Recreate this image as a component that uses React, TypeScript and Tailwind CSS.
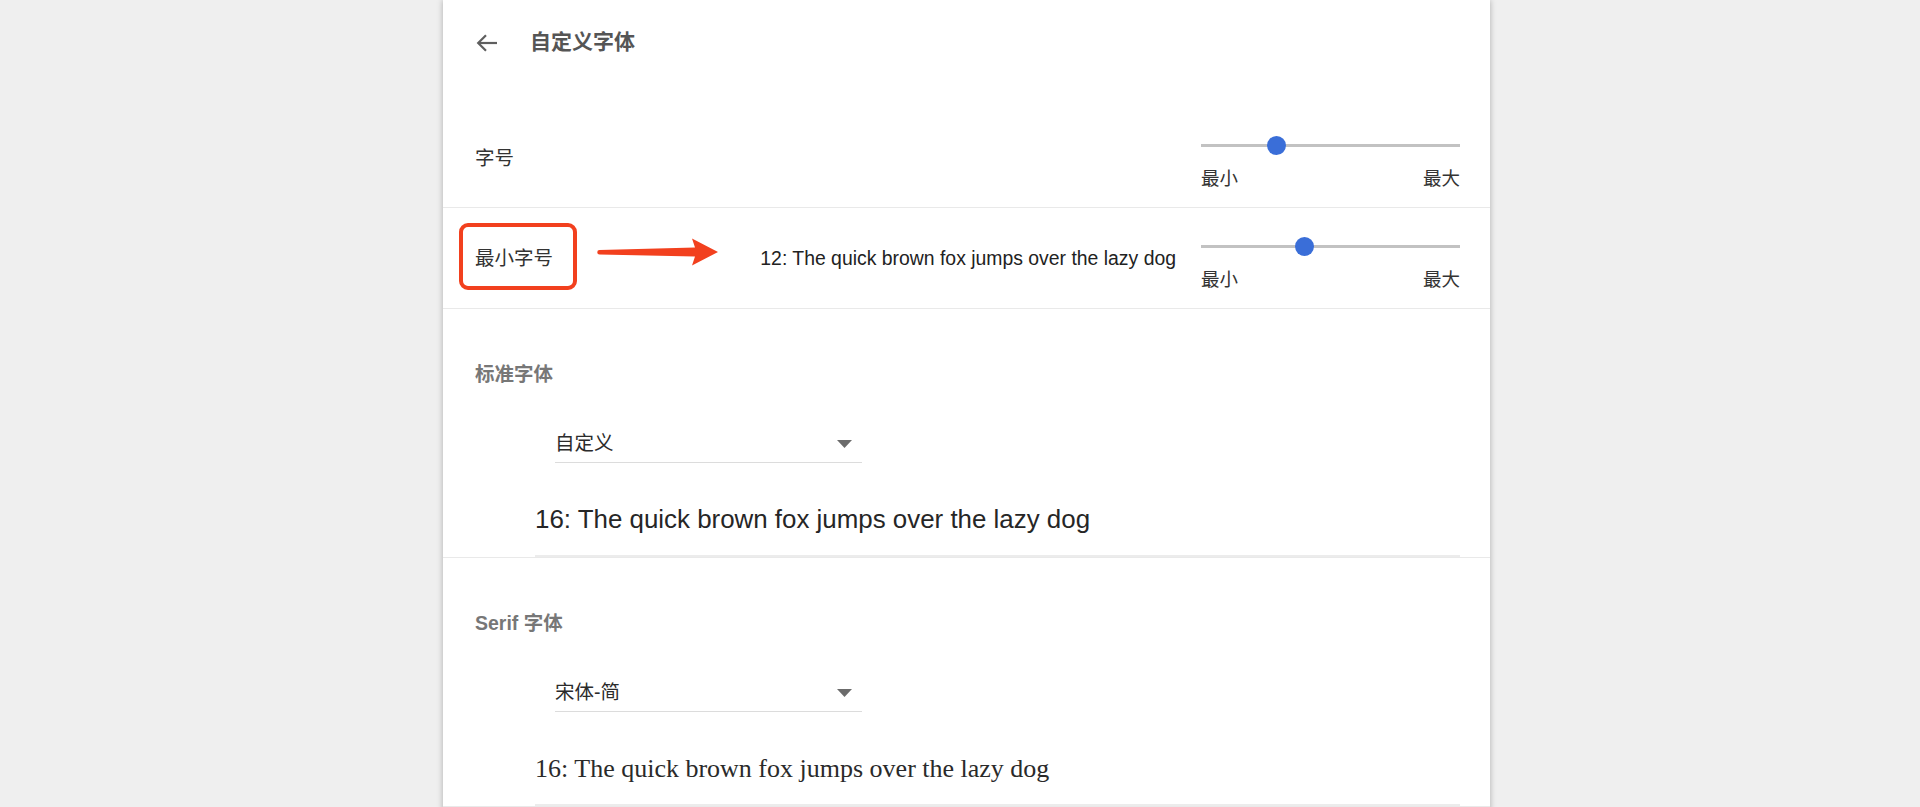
import React from "react";

const sans = "font-['Liberation_Sans','Noto_Sans_CJK_SC',sans-serif]";

interface SliderProps {
  percent: number;
}

const Slider: React.FC<SliderProps> = ({ percent }) => {
  return (
    <div className="w-[259px] self-start mt-[28px] shrink-0">
      <div className="relative h-[20px] flex items-center">
        <div className="w-full h-[3px] bg-[#c2c2c2]" />
        <div
          className="absolute top-[0.5px] w-[19px] h-[19px] -ml-[9.5px] rounded-full bg-[#3a6ed8]"
          style={{ left: `${percent}%` }}
        />
      </div>
      <div className="mt-[12px] flex justify-between text-[18.5px] leading-[24px] text-[#333]">
        <span>最小</span>
        <span>最大</span>
      </div>
    </div>
  );
};

interface FontSectionProps {
  title: string;
  value: string;
  serif?: boolean;
}

const FontSection: React.FC<FontSectionProps> = ({ title, value, serif }) => {
  return (
    <div className="pl-[32px] pr-[30px] pt-[53px] border-b border-[#e9e9e9]">
      <div className="text-[19.5px] leading-[24px] font-semibold text-[#777]">{title}</div>
      <div className="ml-[80px] mt-[39px] w-[307px] h-[38px] pr-[10px] flex items-center justify-between border-b-[1.5px] border-[#dcdcdc]">
        <span className="text-[19.5px] text-[#2b2b2b]">{value}</span>
        <svg width="15" height="8" viewBox="0 0 15 8">
          <polygon points="0,0 15,0 7.5,8" fill="#6b6b6b" />
        </svg>
      </div>
      <div className="ml-[60px] mt-[20px] h-[74px] flex items-center border-b-2 border-[#ececec]">
        <span
          className={
            serif
              ? "font-['Liberation_Serif',serif] text-[26px] text-[#2a2a2a]"
              : "text-[25.9px] text-[#262626]"
          }
        >
          16: The quick brown fox jumps over the lazy dog
        </span>
      </div>
    </div>
  );
};

const App: React.FC = () => {
  return (
    <div className={`min-h-screen bg-[#efefef] ${sans}`}>
      <div className="ml-[443px] w-[1047px] min-h-screen bg-white shadow-[0_0_6px_rgba(0,0,0,0.28)] pb-[120px]">
        {/* header */}
        <div className="h-[83px] flex items-center pl-[33px]">
          <svg width="22" height="20" viewBox="0 0 22 20" className="mt-[2px]">
            <line x1="21" y1="10" x2="2.5" y2="10" stroke="#5f5f5f" strokeWidth="2.2" />
            <polyline points="10,2.2 2.2,10 10,17.8" fill="none" stroke="#5f5f5f" strokeWidth="2.2" />
          </svg>
          <span className="ml-[32px] text-[21px] font-semibold text-[#555]">自定义字体</span>
        </div>

        {/* font size */}
        <div className="mt-[24px] h-[101px] pl-[32px] pr-[30px] flex items-start border-b border-[#e9e9e9]">
          <span className="mt-[39px] text-[19.5px] leading-[24px] text-[#333]">字号</span>
          <div className="flex-1" />
          <Slider percent={29} />
        </div>

        {/* minimum font size */}
        <div className="relative h-[101px] pl-[32px] pr-[30px] flex items-start border-b border-[#e9e9e9]">
          <span className="mt-[38px] text-[19.5px] leading-[24px] text-[#333]">最小字号</span>
          <div className="flex-1" />
          <span className="mt-[38px] mr-[25px] text-[19.4px] leading-[24px] text-[#222]">
            12: The quick brown fox jumps over the lazy dog
          </span>
          <Slider percent={40} />

          {/* annotation overlay */}
          <div className="absolute left-[16px] top-[15px] w-[118px] h-[67px] rounded-[9px] border-4 border-[#f2401e]" />
          <svg
            className="absolute left-[154px] top-[30px]"
            width="122"
            height="28"
            viewBox="0 0 122 28"
          >
            <path
              d="M2.5,12 L98,9.5 L95,0.5 L121,14 L95,27.5 L98,18.5 L2.5,16.5 A2.2,2.2 0 0 1 2.5,12 Z"
              fill="#f2401e"
            />
          </svg>
        </div>

        <FontSection title="标准字体" value="自定义" />
        <FontSection title="Serif 字体" value="宋体-简" serif />
      </div>
    </div>
  );
};

export default App;
